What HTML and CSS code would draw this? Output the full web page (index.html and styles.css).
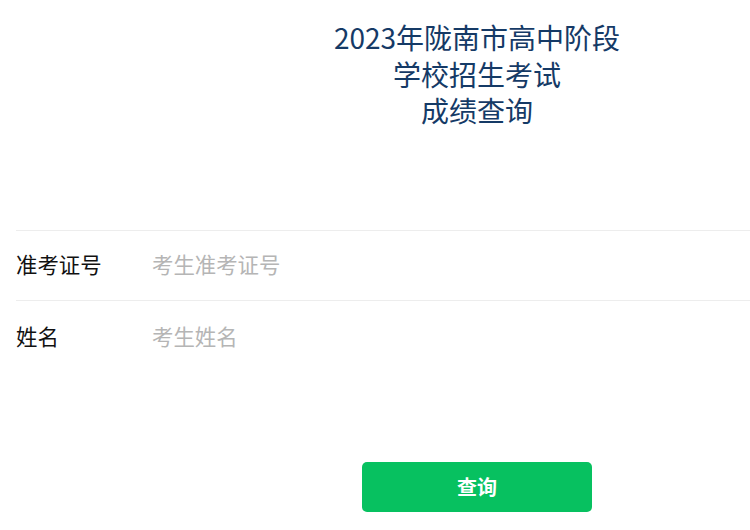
FILE: index.html
```html
<!DOCTYPE html>
<html lang="zh-CN">
<head>
<meta charset="utf-8">
<title>2023年陇南市高中阶段学校招生考试成绩查询</title>
<link rel="stylesheet" href="styles.css">
</head>
<body>
<div class="page">
  <h1 class="title">2023年陇南市高中阶段<br>学校招生考试<br>成绩查询</h1>
  <form class="form">
    <div class="row">
      <label class="label">准考证号</label>
      <input class="input" type="text" placeholder="考生准考证号">
    </div>
    <div class="row">
      <label class="label">姓名</label>
      <input class="input" type="text" placeholder="考生姓名">
    </div>
    <div class="actions">
      <button class="btn" type="button">查询</button>
    </div>
  </form>
</div>
</body>
</html>
```
FILE: styles.css
```css
html, body {
  margin: 0;
  padding: 0;
  background: #fff;
  font-family: "Noto Sans CJK SC", "Noto Sans", sans-serif;
}
.page {
  width: 100%;
}
.title {
  margin: 19px 0 0;
  padding-left: 204px;
  text-align: center;
  font-size: 28px;
  font-weight: normal;
  line-height: 36.5px;
  color: #153a66;
}
.form {
  margin: 101px 0 0 16px;
}
.row {
  display: flex;
  align-items: center;
  height: 70px;
  padding-bottom: 4px;
  box-sizing: border-box;
  border-top: 1px solid #ededed;
}
.row + .row {
  height: 72px;
  padding-bottom: 2px;
}
.label {
  width: 136px;
  font-size: 21.4px;
  color: #111;
}
.input {
  flex: 1;
  min-width: 0;
  border: none;
  outline: none;
  padding: 0;
  font-family: inherit;
  font-size: 21.4px;
  color: #111;
  background: transparent;
}
.input::placeholder {
  color: #b5b5b5;
}
.actions {
  display: flex;
  justify-content: center;
  margin: 90px 0 0;
  padding-left: 188px;
}
.btn {
  width: 230px;
  height: 50px;
  border: none;
  border-radius: 5px;
  background: #07c160;
  color: #fff;
  font-family: inherit;
  font-size: 20px;
  font-weight: bold;
}
```
